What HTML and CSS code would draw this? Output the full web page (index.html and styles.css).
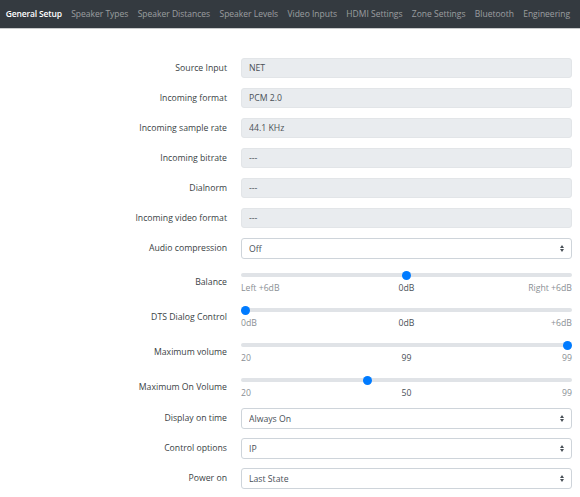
FILE: index.html
```html
<!DOCTYPE html>
<html lang="en">
<head>
    <meta charset="UTF-8">
    <meta name="viewport" content="width=device-width, initial-scale=1.0">
    <title>General Setup</title>
    <link rel="stylesheet" href="styles.css">
</head>
<body>
    <nav class="navbar">
        <a class="nav-link active" href="#">General Setup</a>
        <a class="nav-link" href="#">Speaker Types</a>
        <a class="nav-link" href="#">Speaker Distances</a>
        <a class="nav-link" href="#">Speaker Levels</a>
        <a class="nav-link" href="#">Video Inputs</a>
        <a class="nav-link" href="#">HDMI Settings</a>
        <a class="nav-link" href="#">Zone Settings</a>
        <a class="nav-link" href="#">Bluetooth</a>
        <a class="nav-link" href="#">Engineering</a>
    </nav>

    <form class="settings">
        <div class="row">
            <label>Source Input</label>
            <input class="form-control" type="text" value="NET" readonly>
        </div>
        <div class="row">
            <label>Incoming format</label>
            <input class="form-control" type="text" value="PCM 2.0" readonly>
        </div>
        <div class="row">
            <label>Incoming sample rate</label>
            <input class="form-control" type="text" value="44.1 KHz" readonly>
        </div>
        <div class="row">
            <label>Incoming bitrate</label>
            <input class="form-control" type="text" value="---" readonly>
        </div>
        <div class="row">
            <label>Dialnorm</label>
            <input class="form-control" type="text" value="---" readonly>
        </div>
        <div class="row">
            <label>Incoming video format</label>
            <input class="form-control" type="text" value="---" readonly>
        </div>
        <div class="row">
            <label>Audio compression</label>
            <div class="select-wrap">
                <select class="form-select">
                    <option>Off</option>
                    <option>Low</option>
                    <option>High</option>
                </select>
            </div>
        </div>
        <div class="row slider-row">
            <label>Balance</label>
            <div class="slider">
                <input type="range" min="-6" max="6" value="0">
                <div class="range-labels">
                    <span>Left +6dB</span><span class="mid">0dB</span><span>Right +6dB</span>
                </div>
            </div>
        </div>
        <div class="row slider-row">
            <label>DTS Dialog Control</label>
            <div class="slider">
                <input type="range" min="0" max="6" value="0">
                <div class="range-labels">
                    <span>0dB</span><span class="mid">0dB</span><span>+6dB</span>
                </div>
            </div>
        </div>
        <div class="row slider-row">
            <label>Maximum volume</label>
            <div class="slider">
                <input type="range" min="20" max="99" value="99">
                <div class="range-labels">
                    <span>20</span><span class="mid">99</span><span>99</span>
                </div>
            </div>
        </div>
        <div class="row slider-row">
            <label>Maximum On Volume</label>
            <div class="slider">
                <input type="range" min="20" max="99" value="50">
                <div class="range-labels">
                    <span>20</span><span class="mid">50</span><span>99</span>
                </div>
            </div>
        </div>
        <div class="row">
            <label>Display on time</label>
            <div class="select-wrap">
                <select class="form-select">
                    <option>Always On</option>
                    <option>30 seconds</option>
                </select>
            </div>
        </div>
        <div class="row">
            <label>Control options</label>
            <div class="select-wrap">
                <select class="form-select">
                    <option>IP</option>
                    <option>RS232</option>
                </select>
            </div>
        </div>
        <div class="row">
            <label>Power on</label>
            <div class="select-wrap">
                <select class="form-select">
                    <option>Last State</option>
                    <option>Standby</option>
                </select>
            </div>
        </div>
    </form>
</body>
</html>
```

FILE: styles.css
```css
body {
    margin: 0;
    font-family: "Open Sans", "Noto Sans", Arial, sans-serif;
    font-size: 8.7px;
    line-height: 12px;
    color: #3a3f44;
    background-color: #fff;
}
.navbar {
    display: flex;
    align-items: center;
    height: 28px;
    padding: 0 1px;
    background-color: #343a40;
    border-bottom: 1px solid #c8cacc;
}
.nav-link {
    padding: 0 4.65px;
    font-size: 8.5px;
    color: rgba(255, 255, 255, 0.5);
    text-decoration: none;
    white-space: nowrap;
}
.nav-link.active {
    color: #fff;
    font-weight: 600;
    letter-spacing: -0.15px;
}
.settings {
    padding-top: 29px;
}
.row {
    display: grid;
    grid-template-columns: 227px 331px;
    column-gap: 14px;
    align-items: center;
    height: 20px;
    margin-bottom: 10px;
}
.row label {
    text-align: right;
}
.form-control, .form-select {
    box-sizing: border-box;
    width: 100%;
    height: 20px;
    margin: 0;
    padding: 0 7px;
    font-family: inherit;
    font-size: 8.7px;
    color: #495057;
    background-color: #fff;
    border: 1px solid #ced4da;
    border-radius: 3px;
    outline: none;
}
.form-control[readonly] {
    background-color: #e9ecef;
    border-color: #e2e5e8;
}
.select-wrap {
    position: relative;
    height: 20px;
}
.form-select {
    -webkit-appearance: none;
    appearance: none;
    height: 21px;
}
.select-wrap::before, .select-wrap::after {
    content: "";
    position: absolute;
    right: 8px;
    border-left: 2.5px solid transparent;
    border-right: 2.5px solid transparent;
    pointer-events: none;
}
.select-wrap::before {
    top: 7px;
    border-bottom: 3px solid #495057;
}
.select-wrap::after {
    top: 11px;
    border-top: 3px solid #495057;
}
.slider-row {
    height: 25px;
}
.slider-row + .row:not(.slider-row) {
    margin-top: 1px;
}
.slider-row label {
    padding-top: 2px;
}
.slider input[type=range] {
    -webkit-appearance: none;
    appearance: none;
    display: block;
    width: 100%;
    height: 14px;
    margin: 0;
    background: transparent;
}
.slider input[type=range]::-webkit-slider-runnable-track {
    height: 3.5px;
    background-color: #e0e3e7;
    border-radius: 2px;
}
.slider input[type=range]::-webkit-slider-thumb {
    -webkit-appearance: none;
    width: 9px;
    height: 9px;
    margin-top: -2.75px;
    background-color: #007bff;
    border: none;
    border-radius: 50%;
}
.range-labels {
    display: flex;
    justify-content: space-between;
    line-height: 12px;
    color: #8a8f94;
}
.range-labels span {
    flex: 1;
}
.range-labels .mid {
    text-align: center;
    color: #495057;
}
.range-labels span:last-child {
    text-align: right;
}
```
